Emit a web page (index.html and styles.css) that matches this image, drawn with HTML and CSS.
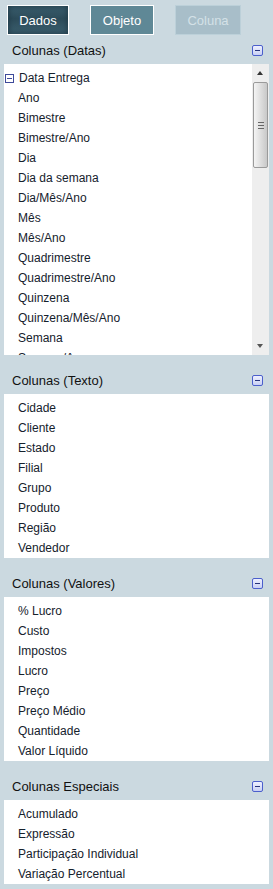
FILE: index.html
```html
<!DOCTYPE html>
<html lang="pt">
<head>
    <meta charset="UTF-8">
    <meta name="viewport" content="width=device-width, initial-scale=1.0">
    <title>Colunas</title>
    <link rel="stylesheet" href="styles.css">
</head>
<body>
    <div class="panel">
        <div class="tabs">
            <button class="tab tab-active">Dados</button>
            <button class="tab">Objeto</button>
            <button class="tab tab-disabled">Coluna</button>
        </div>

        <div class="section">
            <div class="section-header">
                <span>Colunas (Datas)</span>
                <span class="collapse"></span>
            </div>
            <div class="box box-scroll">
                <ul class="items">
                    <li class="group"><span class="tree-minus"></span>Data Entrega</li>
                    <li>Ano</li>
                    <li>Bimestre</li>
                    <li>Bimestre/Ano</li>
                    <li>Dia</li>
                    <li>Dia da semana</li>
                    <li>Dia/Mês/Ano</li>
                    <li>Mês</li>
                    <li>Mês/Ano</li>
                    <li>Quadrimestre</li>
                    <li>Quadrimestre/Ano</li>
                    <li>Quinzena</li>
                    <li>Quinzena/Mês/Ano</li>
                    <li>Semana</li>
                    <li>Semana/Ano</li>
                </ul>
                <div class="scrollbar">
                    <div class="arrow arrow-up"></div>
                    <div class="thumb"><span class="grip"></span></div>
                    <div class="track"></div>
                    <div class="arrow arrow-down"></div>
                </div>
            </div>
        </div>

        <div class="section">
            <div class="section-header">
                <span>Colunas (Texto)</span>
                <span class="collapse"></span>
            </div>
            <div class="box">
                <ul class="items">
                    <li>Cidade</li>
                    <li>Cliente</li>
                    <li>Estado</li>
                    <li>Filial</li>
                    <li>Grupo</li>
                    <li>Produto</li>
                    <li>Região</li>
                    <li>Vendedor</li>
                </ul>
            </div>
        </div>

        <div class="section">
            <div class="section-header">
                <span>Colunas (Valores)</span>
                <span class="collapse"></span>
            </div>
            <div class="box">
                <ul class="items">
                    <li>% Lucro</li>
                    <li>Custo</li>
                    <li>Impostos</li>
                    <li>Lucro</li>
                    <li>Preço</li>
                    <li>Preço Médio</li>
                    <li>Quantidade</li>
                    <li>Valor Líquido</li>
                </ul>
            </div>
        </div>

        <div class="section">
            <div class="section-header">
                <span>Colunas Especiais</span>
                <span class="collapse"></span>
            </div>
            <div class="box">
                <ul class="items">
                    <li>Acumulado</li>
                    <li>Expressão</li>
                    <li>Participação Individual</li>
                    <li>Variação Percentual</li>
                </ul>
            </div>
        </div>
    </div>
</body>
</html>
```

FILE: styles.css
```css
html, body {
    margin: 0;
    padding: 0;
    background: #eef2f4;
}
body {
    font-family: "Liberation Sans", Arial, sans-serif;
    color: #15212c;
}
.panel {
    width: 265px;
    height: 889px;
    padding: 0 5px 0 4px;
    background: #cbd9e0;
    border-right: 1px solid #9aa9b1;
    overflow: hidden;
}
.tabs {
    display: flex;
    gap: 21px;
    padding: 5px 0 0 3px;
    height: 31px;
}
.tab {
    height: 30px;
    width: 64px;
    border: 1px solid #ffffff;
    background: #5f8896;
    color: #ffffff;
    font-family: "Liberation Sans", Arial, sans-serif;
    font-size: 13px;
    padding: 0;
}
.tab-active {
    width: 62px;
    background: linear-gradient(#3b5f6f, #2c4b59 45%, #3c6070);
    box-shadow: inset 0 0 6px #1c3440;
}
.tab-disabled {
    width: 66px;
    background: #a8bec9;
    border-color: #bcd0d9;
    color: #d4e1e7;
}
.section + .section {
    margin-top: 11px;
}
.section-header {
    display: flex;
    align-items: center;
    justify-content: space-between;
    height: 28px;
    padding: 0 6px 0 8px;
    font-size: 13px;
    color: #111;
}
.collapse {
    width: 9px;
    height: 9px;
    border: 1px solid #4b5fcc;
    border-radius: 2px;
    background: linear-gradient(#eef0ff, #c9d0f4);
    position: relative;
}
.collapse::after {
    content: "";
    position: absolute;
    left: 2px;
    right: 2px;
    top: 4px;
    height: 1px;
    background: #26337a;
}
.box {
    background: #ffffff;
    padding-top: 4px;
}
.box-scroll {
    display: flex;
    height: 291px;
    padding-top: 0;
}
.box-scroll .items {
    flex: 1;
    padding-top: 4px;
    overflow: hidden;
}
.items {
    list-style: none;
    margin: 0;
    padding: 0;
}
.items li {
    height: 20px;
    line-height: 20px;
    font-size: 12px;
    padding-left: 14px;
    white-space: nowrap;
}
.items .group {
    display: flex;
    align-items: center;
    padding-left: 1px;
}
.tree-minus {
    width: 7px;
    height: 7px;
    border: 1px solid #3e4a9a;
    margin-right: 5px;
    position: relative;
}
.tree-minus::after {
    content: "";
    position: absolute;
    left: 1px;
    right: 1px;
    top: 3px;
    height: 1px;
    background: #3e4a9a;
}
.scrollbar {
    width: 17px;
    display: flex;
    flex-direction: column;
    background: #eeeeee;
}
.arrow {
    height: 18px;
    position: relative;
}
.arrow::after {
    content: "";
    position: absolute;
    left: 5px;
    border-left: 3px solid transparent;
    border-right: 3px solid transparent;
}
.arrow-up::after {
    top: 7px;
    border-bottom: 4px solid #333;
}
.arrow-down::after {
    top: 7px;
    border-top: 4px solid #555;
}
.thumb {
    height: 84px;
    margin: 0 1px;
    border: 1px solid #9a9a9a;
    border-radius: 2px;
    background: linear-gradient(90deg, #f4f4f4, #dadada 60%, #c8c8c8);
    display: flex;
    align-items: center;
    justify-content: center;
}
.grip {
    width: 6px;
    height: 5px;
    border-top: 1px solid #666;
    border-bottom: 1px solid #666;
    position: relative;
}
.grip::after {
    content: "";
    position: absolute;
    left: 0;
    right: 0;
    top: 2px;
    height: 1px;
    background: #666;
}
.track {
    flex: 1;
}
```
